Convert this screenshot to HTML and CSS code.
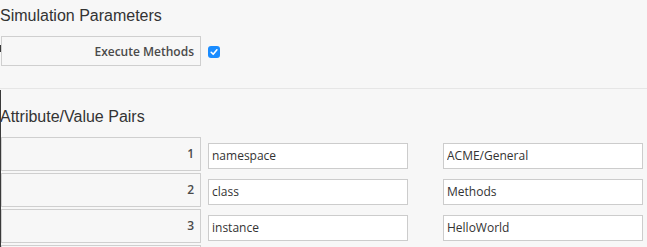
FILE: index.html
```html
<!DOCTYPE html>
<html>
<head>
<meta charset="utf-8">
<link rel="stylesheet" href="styles.css">
</head>
<body>
<div class="edge edge-top"></div>
<div class="edge edge-main"></div>
<section class="panel">
  <h3 class="heading">Simulation Parameters</h3>
  <div class="row row-param">
    <div class="label label-param">Execute Methods</div>
    <span class="check" role="checkbox" aria-checked="true">
      <svg viewBox="0 0 12 12" width="12" height="12"><path d="M3.2 6.3 L5.2 8.3 L8.9 3.8" fill="none" stroke="#fff" stroke-width="1.6" stroke-linecap="round" stroke-linejoin="round"/></svg>
    </span>
  </div>
</section>
<hr class="divider">
<section class="panel">
  <h3 class="heading heading-2">Attribute/Value Pairs</h3>
  <div class="row row-pair">
    <div class="label label-num">1</div>
    <input class="field" type="text" value="namespace">
    <input class="field field-value" type="text" value="ACME/General">
  </div>
  <div class="row row-pair">
    <div class="label label-num">2</div>
    <input class="field" type="text" value="class">
    <input class="field field-value" type="text" value="Methods">
  </div>
  <div class="row row-pair">
    <div class="label label-num">3</div>
    <input class="field" type="text" value="instance">
    <input class="field field-value" type="text" value="HelloWorld">
  </div>
  <div class="row row-pair">
    <div class="label label-num"></div>
  </div>
</section>
</body>
</html>
```
FILE: styles.css
```css
html, body {
  margin: 0;
  padding: 0;
  background: #f7f7f7;
  overflow: hidden;
  height: 247px;
}
body {
  font-family: "Open Sans", "Liberation Sans", sans-serif;
  color: #333;
}
.edge {
  position: fixed;
  left: 0;
  width: 1px;
  background: #3a3a3a;
}
.edge-top { top: 45px; height: 7px; }
.edge-main { top: 90px; bottom: 0; }
.panel {
  display: flex;
  flex-direction: column;
}
.heading {
  margin: 0;
  padding-top: 6px;
  font-family: "Liberation Sans", Arial, sans-serif;
  font-weight: normal;
  font-size: 16px;
  line-height: 20px;
  color: #333;
  margin-bottom: 10px;
}
.heading-2 {
  padding-top: 0;
  margin-top: 18px;
}
.row {
  display: flex;
  align-items: flex-start;
}
.label {
  box-sizing: border-box;
  width: 200px;
  margin-left: 1px;
  border: 1px solid #cfcfcf;
  background: #f7f7f7;
  display: flex;
  align-items: center;
  justify-content: flex-end;
  padding-right: 6px;
  font-weight: 600;
  font-size: 12px;
  color: #4a4a4a;
}
.label-param {
  height: 30px;
}
.check {
  width: 12px;
  height: 12px;
  margin-left: 7px;
  margin-top: 10px;
  border-radius: 3px;
  background: #1a8cff;
  display: flex;
}
.divider {
  margin: 22px 0 0 0;
  border: 0;
  height: 1px;
  background: #e6e6e6;
}
.row-pair {
  margin-bottom: 2px;
}
.label-num {
  height: 34px;
  padding-bottom: 2px;
}
.field {
  box-sizing: border-box;
  width: 200px;
  height: 26px;
  margin: 6px 0 0 7px;
  border: 1px solid #cccccc;
  background: #fff;
  padding: 0 3px 1px;
  font-family: "Open Sans", sans-serif;
  font-size: 12px;
  color: #333;
  outline: none;
}
.field-value {
  margin-left: 35px;
}
```
